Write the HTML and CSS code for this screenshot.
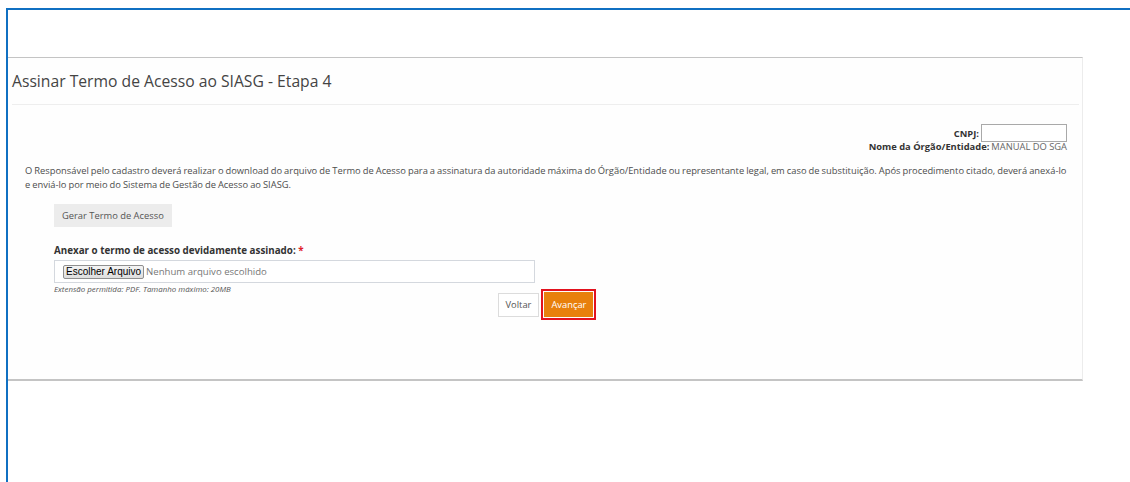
FILE: index.html
```html
<!DOCTYPE html>
<html lang="pt-BR">
<head>
<meta charset="utf-8">
<title>Assinar Termo de Acesso ao SIASG - Etapa 4</title>
<link rel="stylesheet" href="styles.css">
</head>
<body>
<div class="frame">
  <section class="panel">
    <header class="panel-head">
      <h1 class="panel-title">Assinar Termo de Acesso ao SIASG - Etapa 4</h1>
    </header>
    <div class="panel-body">
      <div class="org-info">
        <div class="org-row">
          <span class="org-label">CNPJ:</span>
          <span class="org-input"></span>
        </div>
        <div class="org-row org-row-name">
          <span class="org-label">Nome da Órgão/Entidade:</span>
          <span class="org-value">MANUAL DO SGA</span>
        </div>
      </div>
      <p class="intro">O Responsável pelo cadastro deverá realizar o download do arquivo de Termo de Acesso para a assinatura da autoridade máxima do Órgão/Entidade ou representante legal, em caso de substituição. Após procedimento citado, deverá anexá-lo e enviá-lo por meio do Sistema de Gestão de Acesso ao SIASG.</p>
      <div class="form">
        <button class="btn-gray" type="button">Gerar Termo de Acesso</button>
        <label class="field-label">Anexar o termo de acesso devidamente assinado: <span class="req">*</span></label>
        <div class="file-box">
          <span class="file-btn">Escolher Arquivo</span>
          <span class="file-name">Nenhum arquivo escolhido</span>
        </div>
        <small class="help">Extensão permitida: PDF. Tamanho máximo: 20MB</small>
      </div>
      <div class="actions">
        <button class="btn-white" type="button">Voltar</button>
        <span class="focus-ring"><button class="btn-orange" type="button">Avançar</button></span>
      </div>
    </div>
  </section>
</div>
</body>
</html>
```
FILE: styles.css
```css
html, body {
  margin: 0;
  padding: 0;
  background: #fff;
  height: 100%;
}
body {
  font-family: "Open Sans", "Noto Sans", sans-serif;
  color: #555;
  overflow: hidden;
}
.frame {
  margin: 8px 0 0 6px;
  border-top: 2px solid #1070c2;
  border-left: 2px solid #1070c2;
  height: 480px;
  padding-top: 47px;
  box-sizing: border-box;
}
.panel {
  width: 1075px;
  height: 324px;
  box-sizing: border-box;
  border-top: 1px solid #c4c4c4;
  border-bottom: 2px solid #c4c4c4;
  border-right: 1px solid #ececec;
  background: #fefefe;
  display: flex;
  flex-direction: column;
}
.panel-head {
  margin: 0 3px 0 4px;
  height: 46px;
  border-bottom: 1px solid #eeeeee;
  display: flex;
  align-items: center;
}
.panel-title {
  margin: 0;
  font-size: 15.7px;
  font-weight: 400;
  color: #444;
}
.panel-body {
  padding: 19px 15px 0 17px;
  font-size: 9.35px;
}
.org-info {
  display: flex;
  flex-direction: column;
  align-items: flex-end;
}
.org-row {
  display: flex;
  align-items: center;
  gap: 2px;
  line-height: 11px;
}
.org-row-name {
  margin-top: -1px;
}
.org-label {
  font-weight: 700;
  color: #333;
}
.org-input {
  width: 84px;
  height: 16px;
  border: 1px solid #a9a9a9;
  background: #fff;
}
.org-value {
  color: #666;
}
.intro {
  margin: 12px 0 0;
  line-height: 14px;
  color: #4d4d4d;
  word-spacing: -0.4px;
}
.form {
  margin: 12px 0 0 29px;
  width: 481px;
  display: flex;
  flex-direction: column;
  align-items: flex-start;
}
.btn-gray {
  height: 23px;
  padding: 0 8px;
  border: 0;
  background: #ececec;
  color: #555;
  font: 9.35px "Open Sans", sans-serif;
}
.field-label {
  margin-top: 18px;
  font-size: 9.8px;
  font-weight: 700;
  color: #333;
  line-height: 12px;
}
.req {
  color: #e0202a;
}
.file-box {
  margin-top: 3px;
  width: 100%;
  height: 23px;
  box-sizing: border-box;
  border: 1px solid #d4d8de;
  background: #fff;
  display: flex;
  align-items: center;
  padding-left: 8px;
  gap: 2px;
}
.file-btn {
  font: 10px/12px "Liberation Sans", Arial, sans-serif;
  color: #000;
  padding: 0 2px;
  border: 1px solid #8f8f8f;
  border-radius: 2px;
  background: linear-gradient(#f4f4f4, #dedede);
}
.file-name {
  font-size: 9.6px;
  color: #777;
}
.help {
  margin-top: 1px;
  font-size: 7.9px;
  line-height: 10px;
  font-style: italic;
  color: #555;
}
.actions {
  margin-top: -5px;
  display: flex;
  justify-content: center;
  align-items: center;
  gap: 2px;
  padding-left: 2px;
}
.btn-white {
  height: 24px;
  padding: 0 7px;
  border: 1px solid #dcdcdc;
  background: #fff;
  color: #555;
  font: 9.35px "Open Sans", sans-serif;
}
.focus-ring {
  display: inline-flex;
  padding: 1px;
  border: 2px solid #e2121e;
}
.btn-orange {
  height: 25px;
  padding: 0 7px;
  border: 0;
  background: #e8800c;
  color: #fff;
  font: 9.35px "Open Sans", sans-serif;
}
```
